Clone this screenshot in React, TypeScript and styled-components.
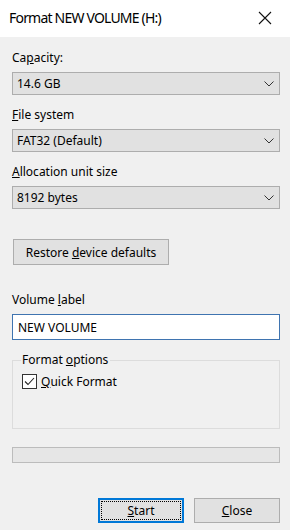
import React from "react"
import styled, { createGlobalStyle } from "styled-components"

const GlobalStyle = createGlobalStyle`
  html, body {
    margin: 0;
    padding: 0;
    background: #f0f0f0;
  }
  body {
    font-family: "Noto Sans", "Open Sans", sans-serif;
    font-size: 12px;
    color: #000;
  }
`

const Chevron = () => (
  <svg width="10" height="6" viewBox="0 0 10 6">
    <path d="M0.5 0.5 L5 5 L9.5 0.5" fill="none" stroke="#333" strokeWidth="1" />
  </svg>
)

const CloseIcon = () => (
  <svg width="14" height="14" viewBox="0 0 14 14">
    <path d="M1 1 L13 13 M13 1 L1 13" stroke="#111" strokeWidth="1.1" />
  </svg>
)

const Check = () => (
  <svg width="13" height="13" viewBox="0 0 13 13">
    <path d="M2 6.5 L5 9.5 L11 3" fill="none" stroke="#222" strokeWidth="1.1" />
  </svg>
)

const Key = ({ children }: { children: React.ReactNode }) => <u>{children}</u>

const App = () => {
  return (
    <Dialog>
      <GlobalStyle />
      <TitleBar>
        <span className="title">Format NEW VOLUME (H:)</span>
        <CloseBox>
          <CloseIcon />
        </CloseBox>
      </TitleBar>

      <Body>
        <Label $top={13}>
          Ca<Key>p</Key>acity:
        </Label>
        <Select>
          <span>14.6 GB</span>
          <Chevron />
        </Select>

        <Label $top={12}>
          <Key>F</Key>ile system
        </Label>
        <Select>
          <span>FAT32 (Default)</span>
          <Chevron />
        </Select>

        <Label $top={12}>
          <Key>A</Key>llocation unit size
        </Label>
        <Select>
          <span>8192 bytes</span>
          <Chevron />
        </Select>

        <RestoreButton>
          <span>
            Restore <Key>d</Key>evice defaults
          </span>
        </RestoreButton>

        <Label $top={27}>
          Volume <Key>l</Key>abel
        </Label>
        <TextInput>NEW VOLUME</TextInput>

        <GroupBox>
          <legend>
            Format <Key>o</Key>ptions
          </legend>
          <CheckRow>
            <CheckBox>
              <Check />
            </CheckBox>
            <span>
              <Key>Q</Key>uick Format
            </span>
          </CheckRow>
        </GroupBox>

        <Progress />

        <ButtonRow>
          <DialogButton $primary>
            <span className="focus">
              <Key>S</Key>tart
            </span>
          </DialogButton>
          <DialogButton>
            <span className="focus">
              <Key>C</Key>lose
            </span>
          </DialogButton>
        </ButtonRow>
      </Body>
    </Dialog>
  )
}

const Dialog = styled.div`
  width: 290px;
  height: 530px;
  background: #f0f0f0;
  display: flex;
  flex-direction: column;
  overflow: hidden;
`

const TitleBar = styled.div`
  height: 37px;
  background: #fff;
  display: flex;
  align-items: center;
  justify-content: space-between;
  padding: 0 0 2px 9px;
  box-sizing: border-box;

  .title {
    font-size: 14px;
    letter-spacing: -0.8px;
    color: #000;
  }
`

const CloseBox = styled.div`
  width: 46px;
  display: flex;
  justify-content: center;
  align-items: center;
  margin-right: 2px;
`

const Body = styled.div`
  display: flex;
  flex-direction: column;
  padding: 0 10px 0 12px;
`

const Label = styled.div<{ $top: number }>`
  margin-top: ${(p) => p.$top}px;
  line-height: 16px;
  height: 16px;
  margin-bottom: 6px;
`

const Select = styled.div`
  height: 23px;
  box-sizing: border-box;
  border: 1px solid #adadad;
  background: #e1e1e1;
  display: flex;
  align-items: center;
  justify-content: space-between;
  padding: 0 5px 0 4px;
  line-height: 16px;
`

const RestoreButton = styled.div`
  margin-top: 30px;
  margin-left: 1px;
  width: 156px;
  height: 26px;
  box-sizing: border-box;
  border: 1px solid #adadad;
  background: #e1e1e1;
  display: flex;
  align-items: center;
  justify-content: center;
`

const TextInput = styled.div`
  height: 26px;
  box-sizing: border-box;
  border: 1px solid #3f74b0;
  background: #fff;
  display: flex;
  align-items: center;
  padding: 0 5px;
`

const GroupBox = styled.fieldset`
  margin: 12px 0 0 0;
  padding: 5px 8px 0 8px;
  height: 77px;
  box-sizing: border-box;
  border: 1px solid #dcdcdc;
  border-radius: 0;

  legend {
    padding: 0 2px 0 1px;
    line-height: 16px;
  }
`

const CheckRow = styled.div`
  display: flex;
  align-items: center;
  gap: 4px;
  margin-left: 1px;
`

const CheckBox = styled.div`
  width: 15px;
  height: 15px;
  box-sizing: border-box;
  border: 1px solid #333;
  background: #fff;
  display: flex;
  align-items: center;
  justify-content: center;
`

const Progress = styled.div`
  margin-top: 18px;
  height: 16px;
  box-sizing: border-box;
  border: 1px solid #bcbcbc;
  background: #e6e6e6;
`

const ButtonRow = styled.div`
  margin-top: 35px;
  display: flex;
  justify-content: flex-end;
  gap: 10px;
`

const DialogButton = styled.div<{ $primary?: boolean }>`
  width: 86px;
  height: 25px;
  box-sizing: border-box;
  border: ${(p) => (p.$primary ? "2px solid #0078d7" : "1px solid #adadad")};
  background: #e1e1e1;
  padding: ${(p) => (p.$primary ? "1px" : "2px")};
  display: flex;

  .focus {
    flex: 1;
    display: flex;
    align-items: center;
    justify-content: center;
    border: 1px dotted ${(p) => (p.$primary ? "#000" : "transparent")};
  }
`

export default App
